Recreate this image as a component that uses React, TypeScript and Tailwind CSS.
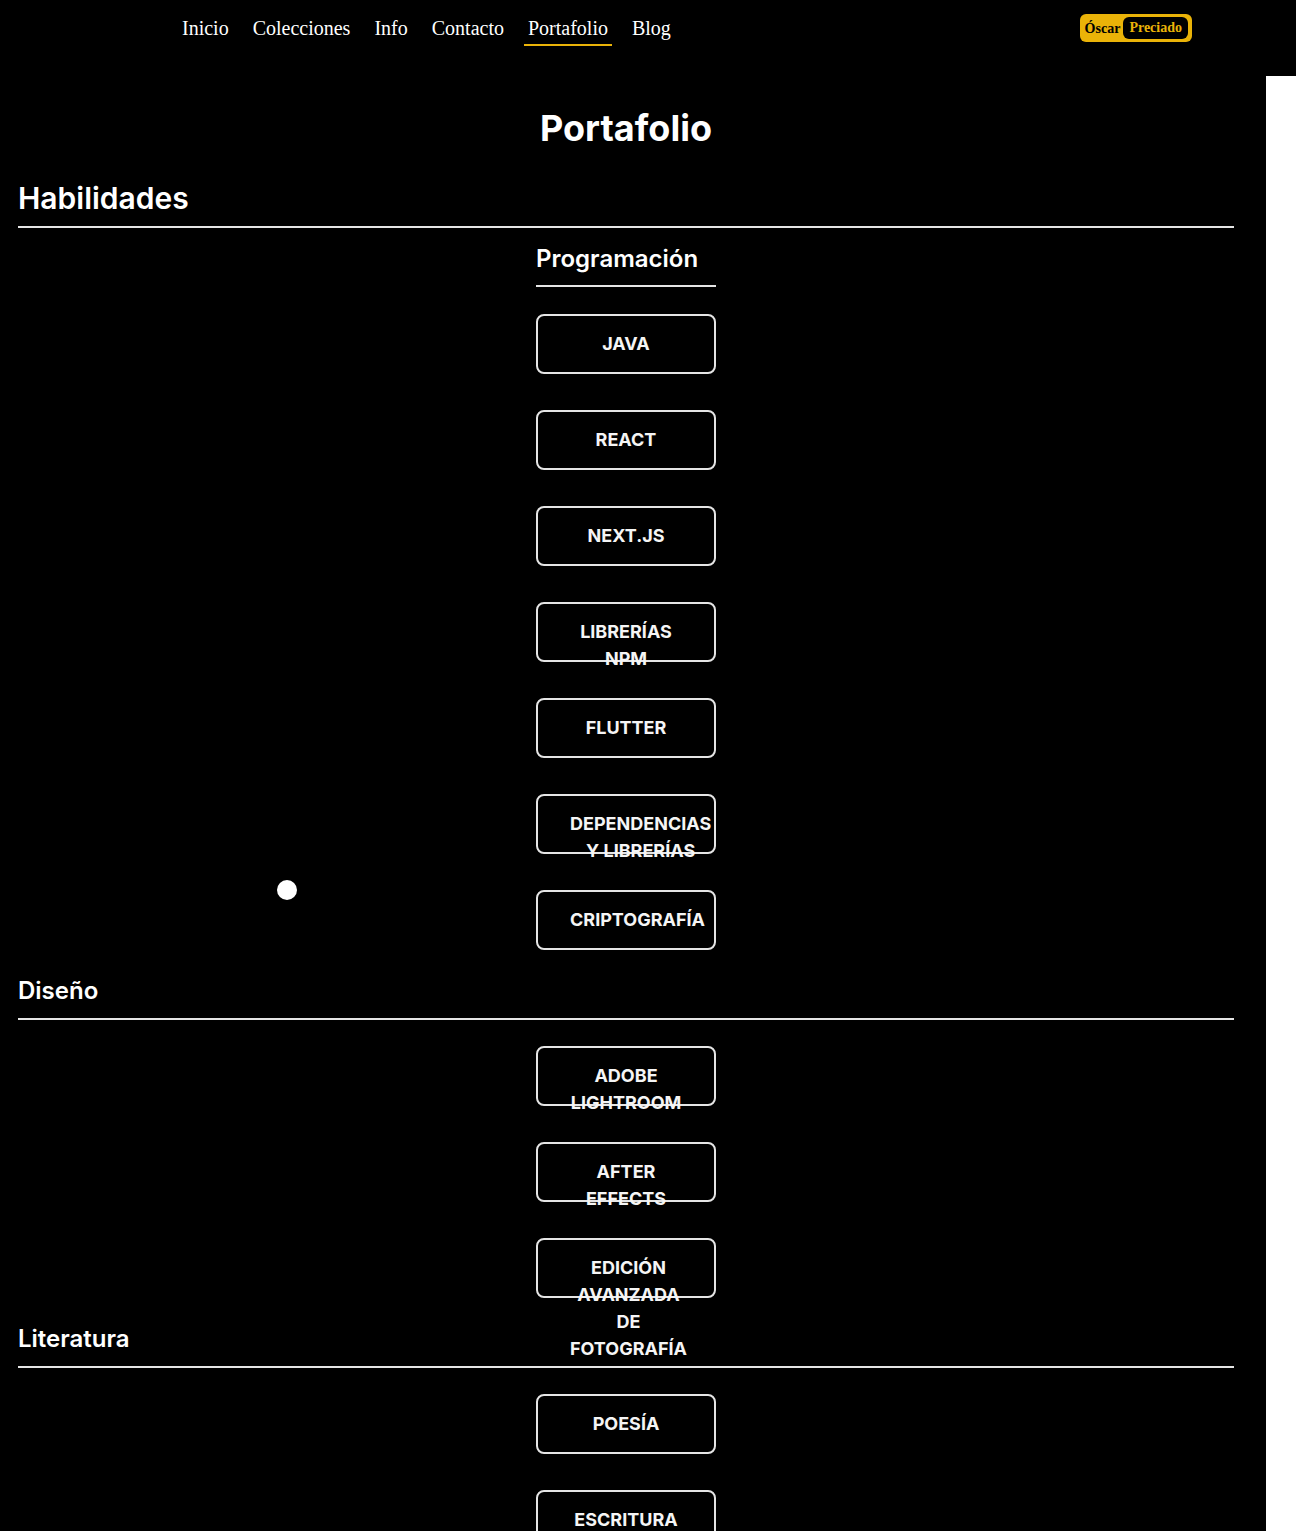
import React from "react";

const navLinks = ["Inicio", "Colecciones", "Info", "Contacto", "Portafolio", "Blog"];

type Section = {
  title: string;
  size: "lg" | "md";
  sub?: string;
  items: string[];
};

const sections: Section[] = [
  {
    title: "Habilidades",
    size: "lg",
    sub: "Programación",
    items: ["Java", "React", "Next.js", "Librerías npm", "Flutter", "Dependencias y librerías", "Criptografía"],
  },
  {
    title: "Diseño",
    size: "md",
    items: ["Adobe Lightroom", "After Effects", "Edición avanzada de fotografía"],
  },
  {
    title: "Literatura",
    size: "md",
    items: ["Poesía", "Escritura"],
  },
];

const SkillButton = ({ label }: { label: string }) => (
  <div className="h-[60px] w-[180px] shrink-0 rounded-lg border-2 border-[#e5e5e5] px-8 pt-[14px]">
    <div className="w-min min-w-full text-center text-lg font-bold uppercase leading-[27px] text-[#f5f5f5]">
      {label}
    </div>
  </div>
);

const Header = () => (
  <header className="flex h-[76px] w-full items-start bg-black font-['Liberation_Serif',serif]">
    <nav className="ml-[178px] mt-[16px] flex gap-4">
      {navLinks.map((link) => (
        <a
          key={link}
          href="#"
          className={
            link === "Portafolio"
              ? "border-b-2 border-[#eab308] px-1 pb-[4px] text-[20px] leading-6 text-white"
              : "px-1 pb-[4px] text-[20px] leading-6 text-white"
          }
        >
          {link}
        </a>
      ))}
    </nav>
    <div className="ml-auto mr-[104px] mt-[14px] flex h-7 items-center gap-[3px] rounded-md bg-[#eab308] pl-[5px] pr-1 text-[14px] font-bold">
      <span className="text-black">Óscar</span>
      <span className="rounded-md bg-black px-[6px] leading-[22px] text-[#eab308]">Preciado</span>
    </div>
  </header>
);

export default function App() {
  return (
    <div className="relative min-h-[1531px] w-full bg-white font-['Inter',sans-serif]">
      <Header />
      <main className="w-[1266px] bg-black pb-10 pl-[18px] pr-[32px] pt-8">
        <h1 className="text-center text-4xl font-bold leading-10 text-white">Portafolio</h1>
        {sections.map((section, i) => (
          <section key={section.title} className={i === 0 ? "mt-8" : "mt-[25px]"}>
            <h2
              className={
                section.size === "lg"
                  ? "border-b-2 border-[#e5e5e5] pb-[10px] text-3xl font-semibold leading-9 text-white"
                  : "border-b-2 border-[#e5e5e5] pb-[11px] text-2xl font-semibold leading-8 text-white"
              }
            >
              {section.title}
            </h2>
            <div className="mx-auto flex w-[180px] flex-col">
              {section.sub && (
                <h3 className="mt-[15px] border-b-2 border-[#e5e5e5] pb-[10px] text-2xl font-semibold leading-8 text-white">
                  {section.sub}
                </h3>
              )}
              <div className={section.sub ? "mt-[27px] flex flex-col gap-9" : "mt-[26px] flex flex-col gap-9"}>
                {section.items.map((item) => (
                  <SkillButton key={item} label={item} />
                ))}
              </div>
            </div>
          </section>
        ))}
      </main>
      <div className="pointer-events-none absolute left-[277px] top-[880px] h-5 w-5 rounded-full bg-white" />
    </div>
  );
}
